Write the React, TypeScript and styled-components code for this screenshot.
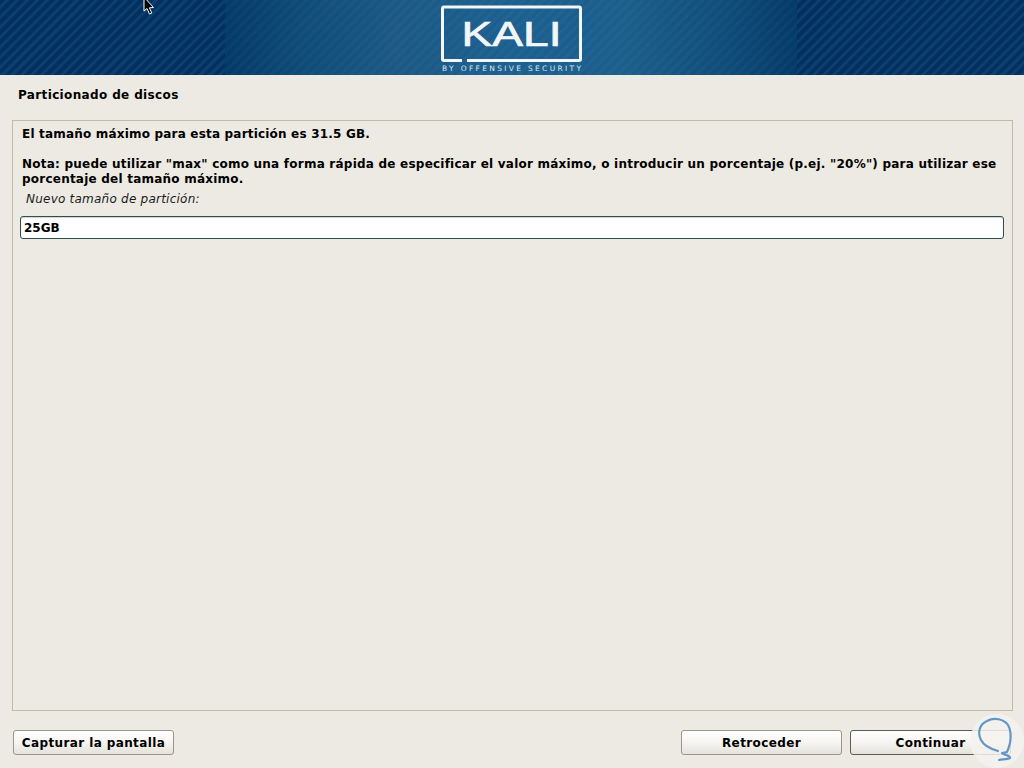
import styled, { createGlobalStyle } from "styled-components";

const GlobalStyle = createGlobalStyle`
  html, body {
    margin: 0;
    padding: 0;
    background: #edeae3;
  }
`;

const Wrapper = styled.div`
  position: relative;
  width: 1024px;
  height: 768px;
  overflow: hidden;
  display: flex;
  flex-direction: column;
  background: #edeae3;
  color: #000;
  font-family: "DejaVu Sans", sans-serif;
  font-size: 12px;
`;

const Banner = styled.div`
  height: 75px;
  flex: none;
  display: flex;
  padding-left: 225px;
  background-color: #03305f;
  background-image: repeating-linear-gradient(
    135deg,
    #03305f 0,
    #03305f 4px,
    #0b3f6e 4px,
    #0b3f6e 7px
  );
`;

const BannerGlow = styled.div`
  width: 572px;
  height: 100%;
  display: flex;
  justify-content: center;
  background-image: repeating-linear-gradient(
      135deg,
      rgba(255, 255, 255, 0.025) 0,
      rgba(255, 255, 255, 0.025) 3px,
      rgba(255, 255, 255, 0) 3px,
      rgba(255, 255, 255, 0) 7px
    ),
    linear-gradient(
      to right,
      #033a69 0,
      #0f4c7a 14%,
      #1c5985 30%,
      #1c6090 50%,
      #1c5e8c 70%,
      #0f4c7a 88%,
      #033a69 100%
    );
`;

const Logo = styled.svg`
  width: 144px;
  height: 75px;
  margin-left: 2px;
`;

const StepTitle = styled.h1`
  margin: 0;
  height: 45px;
  padding: 13px 0 0 18px;
  box-sizing: border-box;
  font-size: 12px;
  line-height: 15px;
  font-weight: bold;
  letter-spacing: 0.36px;
`;

const Panel = styled.div`
  height: 591px;
  flex: none;
  margin: 0 11px 0 12px;
  box-sizing: border-box;
  border: 1px solid #c2b9a6;
  padding: 6px 8px 0 7px;
`;

const Message = styled.p<{ $note?: boolean }>`
  margin: ${(props) => (props.$note ? "15px 0 0 2px" : "0 0 0 2px")};
  font-weight: bold;
  line-height: 15px;
  letter-spacing: ${(props) => (props.$note ? "0.225px" : "0.19px")};
`;

const FieldLabel = styled.label`
  display: block;
  margin: 5px 0 0 6px;
  font-style: italic;
  line-height: 15px;
  letter-spacing: 0.23px;
  color: #1a1a1a;
`;

const SizeInput = styled.input`
  display: block;
  width: 100%;
  height: 23px;
  margin-top: 9px;
  padding: 0 3px;
  box-sizing: border-box;
  border: 1px solid #2f4f4f;
  border-radius: 3px;
  outline: none;
  background: #fff;
  font-family: inherit;
  font-size: 12px;
  font-weight: bold;
  color: #000;
  box-shadow: inset 0 1px 1px rgba(0, 0, 0, 0.18);
`;

const ButtonBar = styled.div`
  flex: 1;
  display: flex;
  align-items: flex-start;
  gap: 8px;
  padding: 19px 13px 0 13px;
`;

const Button = styled.button<{ $focused?: boolean }>`
  width: 161px;
  height: 25px;
  padding: 0;
  box-sizing: border-box;
  border: 1px solid ${(props) => (props.$focused ? "#5f5c56" : "#9c9689")};
  border-radius: 3px;
  background: linear-gradient(to bottom, #ffffff 0%, #f7f6f3 45%, #e5e2db 100%);
  font-family: inherit;
  font-size: 12px;
  font-weight: bold;
  letter-spacing: 0.38px;
  color: #000;
`;

const Spacer = styled.div`
  flex: 1;
`;

const Pointer = styled.svg`
  position: absolute;
  left: 143px;
  top: 0;
  width: 12px;
  height: 16px;
`;

const Watermark = styled.svg`
  position: absolute;
  left: 969px;
  top: 713px;
  width: 55px;
  height: 55px;
`;

function App() {
  return (
    <Wrapper>
      <GlobalStyle />
      <Banner>
        <BannerGlow>
          <Logo viewBox="0 0 144 75">
            <path
              d="M22 60.5 H4 Q2.5 60.5 2.5 59 V8.5 Q2.5 7 4 7 H139 Q140.5 7 140.5 8.5 V59 Q140.5 60.5 139 60.5 H27"
              fill="none"
              stroke="#f2f6f9"
              strokeWidth="3"
            />
            <text
              x="71.5"
              y="45.5"
              textAnchor="middle"
              fontFamily="'Liberation Sans', sans-serif"
              fontSize="35"
              fill="#f2f6f9"
              stroke="#f2f6f9"
              strokeWidth="0.7"
              textLength="100"
              lengthAdjust="spacingAndGlyphs"
            >
              KALI
            </text>
            <text
              x="71.5"
              y="71"
              textAnchor="middle"
              fontFamily="'DejaVu Sans', sans-serif"
              fontSize="7.5"
              fill="#dbe6ee"
              textLength="139"
            >
              BY OFFENSIVE SECURITY
            </text>
          </Logo>
        </BannerGlow>
      </Banner>
      <StepTitle>Particionado de discos</StepTitle>
      <Panel>
        <Message>El tamaño máximo para esta partición es 31.5 GB.</Message>
        <Message $note>
          Nota: puede utilizar "max" como una forma rápida de especificar el
          valor máximo, o introducir un porcentaje (p.ej. "20%") para utilizar
          ese porcentaje del tamaño máximo.
        </Message>
        <FieldLabel htmlFor="size">Nuevo tamaño de partición:</FieldLabel>
        <SizeInput id="size" defaultValue="25GB" />
      </Panel>
      <ButtonBar>
        <Button>Capturar la pantalla</Button>
        <Spacer />
        <Button>Retroceder</Button>
        <Button $focused>Continuar</Button>
      </ButtonBar>
      <Pointer viewBox="0 0 12 16">
        <path
          d="M1 -3 L1 11 L4 8.5 L6.5 14 L8.8 13 L6.4 7.8 L10.5 7.5 Z"
          fill="#000"
          stroke="#fff"
          strokeWidth="1"
        />
      </Pointer>
      <Watermark viewBox="0 0 55 55">
        <circle cx="28" cy="28" r="27" fill="#f3f2ee" fillOpacity="0.85" />
        <path
          d="M29 38 C22 36 15 33 12 27 C8 19 11 11 18 8 C25 4 35 6 39 12 C42 17 42 24 41 30 C40 34 39 37 38 39 L33 40 C36 42 42 43 41 45 C38 47 33 46 30 47"
          fill="none"
          stroke="#6396c8"
          strokeWidth="2.2"
          strokeLinecap="round"
          strokeLinejoin="round"
        />
      </Watermark>
    </Wrapper>
  );
}

export default App;
